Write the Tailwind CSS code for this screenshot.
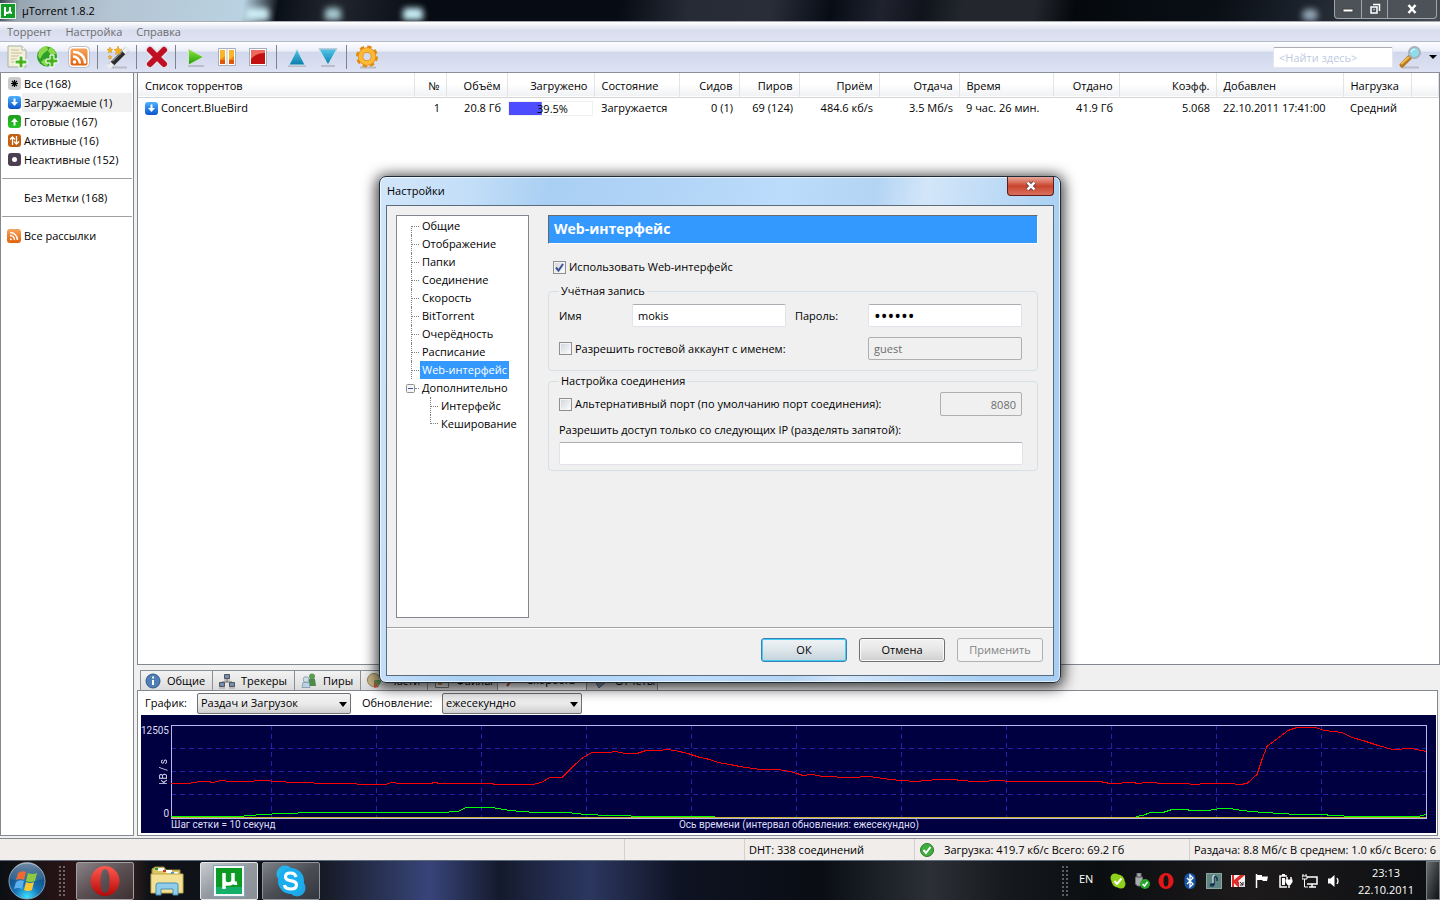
<!DOCTYPE html>
<html lang="ru">
<head>
    <meta charset="UTF-8">
    <meta name="viewport" content="width=device-width, initial-scale=1.0">
    <title>µTorrent 1.8.2</title>
    <script src="https://cdn.jsdelivr.net/npm/@tailwindcss/browser@4"></script>
</head>
<body class="relative flex h-screen flex-col overflow-hidden bg-[#f0f0f0] font-['Open_Sans',sans-serif] text-[11px] leading-4 text-black">

    <!-- Gradients shared by the icons -->
    <svg class="absolute h-0 w-0" aria-hidden="true">
        <defs>
            <linearGradient id="g-blue" x2="0" y2="1"><stop stop-color="#4db1ff"/><stop offset="1" stop-color="#0a55c9"/></linearGradient>
            <linearGradient id="g-green" x2="0" y2="1"><stop stop-color="#1f9c1f"/><stop offset="1" stop-color="#23c523"/></linearGradient>
            <linearGradient id="g-orange" x2="0" y2="1"><stop stop-color="#f7a45c"/><stop offset="1" stop-color="#e0620c"/></linearGradient>
            <linearGradient id="g-cyan" x2="0" y2="1"><stop stop-color="#52c7ea"/><stop offset="1" stop-color="#0c7bab"/></linearGradient>
            <linearGradient id="g-red" x2="0" y2="1"><stop stop-color="#ff5a50"/><stop offset="1" stop-color="#b30808"/></linearGradient>
            <linearGradient id="g-lime" x2="0" y2="1"><stop stop-color="#8ee83a"/><stop offset="1" stop-color="#1d9a0c"/></linearGradient>
            <radialGradient id="g-orb" cx=".5" cy=".95" r=".8"><stop stop-color="#3fe0ff"/><stop offset=".45" stop-color="#1574b8"/><stop offset="1" stop-color="#12416e"/></radialGradient>
            <linearGradient id="g-shine" x2="0" y2="1"><stop stop-color="#fff" stop-opacity=".75"/><stop offset="1" stop-color="#fff" stop-opacity=".1"/></linearGradient>
        </defs>
    </svg>

    <!-- Title bar -->
    <header class="flex h-[22px] shrink-0 items-center justify-between overflow-hidden border-b border-[#a9aab2] bg-[linear-gradient(100deg,#3c4650_0px,#98a6b2_20px,#b4c4d2_110px,#b9d2e2_240px,#0a1018_275px,#22272f_330px,#070b13_420px,#070b13_610px,#262b36_680px,#2a2d38_760px,#070c15_820px,#20232f_870px,#10131b_910px,#23272d_950px,#23272d_1020px,#05090d_1060px,#0a0f16_1200px,#1a212a_1280px,#4a5158_1440px)]">
        <div class="flex items-center gap-1.5">
            <svg class="h-4 w-4" viewBox="0 0 16 16"><rect x=".5" y=".5" width="15" height="15" fill="#0f9d26" stroke="#e5f2ea"/><path d="M5 13V4m0 0v4q0 2 2 2t3-2V4m0 4q0 2 2 2" fill="none" stroke="#fff" stroke-width="2"/></svg>
            <h1>µTorrent 1.8.2</h1>
        </div>
        <div class="flex grow self-stretch pl-[150px]">
            <span class="mt-2 h-3 w-6 rounded-t bg-[#cdeef5] blur-[3px]"></span>
            <span class="mt-2 ml-14 h-3 w-4 rounded-t bg-[#a9cbd3] blur-[3px]"></span>
            <span class="mt-2 ml-[62px] h-3 w-5 rounded-t bg-[#c9f1f8] blur-[3px]"></span>
        </div>
        <span class="mt-2 mr-4 h-3 w-4 rounded-full bg-[#93a5b5] blur-[3px]"></span>
        <div class="mr-[3px] flex h-[19px] self-start rounded-b border border-t-0 border-[#a0a5aa] bg-[#4c5258]">
            <button aria-label="Свернуть" class="flex w-[27px] items-center justify-center border-r border-[#a0a5aa]"><svg class="h-3 w-3" viewBox="0 0 12 12"><rect x="1" y="6" width="10" height="3" fill="#fff" stroke="#444"/></svg></button>
            <button aria-label="Свернуть в окно" class="flex w-[26px] items-center justify-center border-r border-[#a0a5aa]"><svg class="h-3 w-3" viewBox="0 0 12 12"><path d="M4 1.500h6.500V8M2 4h6v6H2zM4.500 6.500h1" fill="none" stroke="#fff" stroke-width="1.500"/></svg></button>
            <button aria-label="Закрыть" class="flex w-[48px] items-center justify-center"><svg class="h-3 w-3" viewBox="0 0 12 12"><path d="M2.500 2l7 8M9.500 2l-7 8" stroke="#fff" stroke-width="2.500"/></svg></button>
        </div>
    </header>

    <!-- Menu -->
    <nav class="flex h-5 shrink-0 items-center gap-3.5 border-b border-[#b4bac8] bg-linear-to-b from-white via-[#d9deef] via-45% to-[#dfe3f4] px-[7px] text-[#6d6d6d]">
        <a href="#">Торрент</a>
        <a href="#">Настройка</a>
        <a href="#">Справка</a>
    </nav>

    <!-- Toolbar -->
    <div class="flex h-[31px] shrink-0 items-center border-b border-[#8b8f9b] bg-[linear-gradient(#fcfdff,#eceff8_30%,#d2d8ec_34%,#dde3f3)]">
        <div class="flex gap-[7px] pr-1.5 pl-[5px]">
            <button aria-label="Добавить торрент"><svg class="h-6 w-6" viewBox="0 0 24 24"><path d="M3 1h14l4 4v17H3z" fill="#f3efd9" stroke="#a9b0a8"/><path d="M17 1v4h4" fill="#fff" stroke="#a9b0a8"/><path d="M6 5h8M6 8h11M6 11h9M6 14h6M6 17h6" stroke="#c8bf98"/><path d="M14 11h4v4h4v4h-4v4h-4v-4h-4v-4h4z" fill="#5cc531" stroke="#fff"/><path d="M16 12v10M11 17h10" stroke="#3aa31d"/></svg></button>
            <button aria-label="Добавить по ссылке"><svg class="h-6 w-6" viewBox="0 0 24 24"><circle cx="11" cy="11.500" r="10" fill="#2da02a"/><path d="M3 6q3-5 8-5l1 4-5 4-3 5-2-3zM14 2q5 2 6 7l-5 1-3-4zM8 14l5 2-2 5q-4-1-6-4z" fill="#8bd84c"/><path d="M14 10h4v4h4v4h-4v4h-4v-4h-4v-4h4z" fill="#5cc531" stroke="#fff"/><path d="M16 11v10M11 16h10" stroke="#3aa31d"/></svg></button>
            <button aria-label="Добавить рассылку"><svg class="h-6 w-6" viewBox="0 0 24 24"><rect x="1.500" y="1.500" width="21" height="21" rx="4" fill="#fff" stroke="#b9bcc4"/><rect x="3.500" y="3.500" width="17" height="17" rx="2" fill="url(#g-orange)"/><path d="M6 11.500a7 7 0 0 1 7 7M6 7a11 11 0 0 1 12 11.500" fill="none" stroke="#fff" stroke-width="2.500"/><circle cx="7.500" cy="17" r="1.800" fill="#fff"/></svg></button>
        </div>
        <div class="flex border-l border-[#7d828e] pr-1.5 pl-2">
            <button aria-label="Создать торрент"><svg class="h-6 w-6" viewBox="0 0 24 24"><path d="M4 22.500h17" stroke="#b8bdc8" stroke-width="2"/><path d="M4 21L21 4" stroke="#2b2b2b" stroke-width="5"/><path d="M2.500 22.500l4-4M17.500 7.500l5-5" stroke="#eceef0" stroke-width="5"/><path d="M6.500 16L16.500 6" stroke="#8a8a8a" stroke-width="1.500"/><path d="M12 1l1 3 3 .5-2.500 2 .8 3L12 8 9.500 9.500l.7-3L8 4.500l3-.5zM4 2l.8 2 2 .3-1.500 1.400.4 2L4 6.700 2.400 7.700l.3-2L1 4.300 3.200 4zM4 10l.6 1.400 1.400.2-1 1 .2 1.400-1.200-.7-1.300.7.3-1.400-1-1 1.400-.2z" fill="#f5b31c" stroke="#d98e0a" stroke-width=".5"/></svg></button>
        </div>
        <div class="flex border-l border-[#7d828e] pr-1.5 pl-2">
            <button aria-label="Удалить"><svg class="h-6 w-6" viewBox="0 0 24 24"><path d="M5 5l14 14M19 5L5 19" stroke="#dfe3e8" stroke-width="9" stroke-linecap="round"/><path d="M5 5l14 14M19 5L5 19" stroke="#c00f25" stroke-width="6" stroke-linecap="round"/></svg></button>
        </div>
        <div class="flex gap-[7px] border-l border-[#7d828e] pr-1.5 pl-2">
            <button aria-label="Запустить"><svg class="h-6 w-6" viewBox="0 0 24 24"><path d="M4 21h16" stroke="#b8bdc8" stroke-width="2"/><path d="M4.500 4l15 8-15 8z" fill="url(#g-lime)" stroke="#d6dfd6"/></svg></button>
            <button aria-label="Пауза"><svg class="h-6 w-6" viewBox="0 0 24 24"><path d="M3.500 3.500h17v17h-17z" fill="#fff" stroke="#a8adb8"/><path d="M5 5h5v14H5zM14 5h5v14h-5z" fill="#f0860c"/><path d="M5 5h5v6l-5 4zM14 5h5v6l-5 4z" fill="#f8b42a"/><path d="M5 19v-4h5v4zM14 19v-4h5v4z" fill="#e0560c"/><path d="M12 3v18" stroke="#b9bec8"/></svg></button>
            <button aria-label="Остановить"><svg class="h-6 w-6" viewBox="0 0 24 24"><rect x="3.500" y="3.500" width="17" height="17" fill="#fff" stroke="#a8adb8"/><rect x="5" y="5" width="14" height="14" fill="#c21010"/><path d="M5 5h14v3q-9 0-14 6z" fill="#ee6a5e"/></svg></button>
        </div>
        <div class="flex gap-[7px] border-l border-[#7d828e] pr-1.5 pl-2">
            <button aria-label="Выше в очереди"><svg class="h-6 w-6" viewBox="0 0 24 24"><path d="M3 21h18" stroke="#b8bdc8" stroke-width="2"/><path d="M12 4l8 16H4z" fill="url(#g-cyan)" stroke="#cfe3ee"/></svg></button>
            <button aria-label="Ниже в очереди"><svg class="h-6 w-6" viewBox="0 0 24 24"><path d="M5 21h14" stroke="#b8bdc8" stroke-width="2"/><path d="M3 4h18l-9 16z" fill="url(#g-cyan)" stroke="#cfe3ee"/><path d="M3 4h18" stroke="#8fb2c4"/></svg></button>
        </div>
        <div class="flex border-l border-[#7d828e] pl-2">
            <button aria-label="Конфигурация"><svg class="h-6 w-6" viewBox="0 0 24 24"><path d="M5 22.500h16" stroke="#b8bdc8" stroke-width="2"/><circle cx="12" cy="11.500" r="9" fill="none" stroke="#e08a14" stroke-width="4" stroke-dasharray="4 3.070"/><circle cx="12" cy="11.500" r="6.500" fill="none" stroke="#e08a14" stroke-width="5.500"/><circle cx="12" cy="11.500" r="6.500" fill="none" stroke="#fbb935" stroke-width="4"/></svg></button>
        </div>
        <div class="ml-auto flex items-center gap-1 pr-[3px]">
            <input type="text" aria-label="Поиск" placeholder="<Найти здесь>" class="h-[21px] w-[120px] rounded-xs border border-[#e2e6ee] border-t-[#abadb3] bg-white px-[5px] placeholder:text-[#bccbe0]">
            <button aria-label="Найти"><svg class="h-6 w-7" viewBox="0 0 28 24"><path d="M4 22.500h18" stroke="#b8bdc8" stroke-width="2"/><path d="M13 12l-8 8" stroke="#b87a1c" stroke-width="5" stroke-linecap="round"/><path d="M12 12l-8 7" stroke="#eebc58" stroke-width="2"/><circle cx="17.500" cy="7.500" r="5.500" fill="#8fdcea" stroke="#a7b0bb" stroke-width="2"/><path d="M14 7q1-3 4-3" stroke="#fff" fill="none"/></svg></button>
            <svg class="h-2 w-2" viewBox="0 0 8 8"><path d="M0 2h8L4 6z"/></svg>
        </div>
    </div>

    <!-- Categories, torrent list and details -->
    <main class="flex min-h-0 flex-1 gap-[3px] pb-[2px]">
        <aside class="flex w-[134px] shrink-0 flex-col border border-t-0 border-[#828790] bg-white px-px pt-px">
            <a href="#" class="flex h-[19px] items-center gap-[3px] pl-1.5"><svg class="h-[13px] w-[13px]" viewBox="0 0 13 13"><rect width="13" height="13" rx="3" fill="#cbcbcb"/><path d="M6.500 3v7M3 6.500h7M4 4l5 5M9 4L4 9" stroke="#000" stroke-width="1.200"/></svg>Все (168)</a>
            <a href="#" class="flex h-[19px] items-center pl-1.5"><svg class="mr-px h-[13px] w-[13px]" viewBox="0 0 13 13"><rect width="13" height="13" rx="3" fill="url(#g-blue)"/><path d="M5.500 2.500h2V6h2.500L6.500 10 3 6h2.500z" fill="#fff"/></svg><span class="flex h-full grow items-center bg-[#f0f0f0] pl-[2px]">Загружаемые (1)</span></a>
            <a href="#" class="flex h-[19px] items-center gap-[3px] pl-1.5"><svg class="h-[13px] w-[13px]" viewBox="0 0 13 13"><rect width="13" height="13" rx="3" fill="url(#g-green)"/><path d="M5.500 10.500h2V7h2.500L6.500 3 3 7h2.500z" fill="#fff"/></svg>Готовые (167)</a>
            <a href="#" class="flex h-[19px] items-center gap-[3px] pl-1.5"><svg class="h-[13px] w-[13px]" viewBox="0 0 13 13"><rect width="13" height="13" rx="3" fill="#c25f12"/><path d="M4.500 11V3M2 5.500L4.500 3 7 5.500M8.500 2v8M6 7.500L8.500 10 11 7.500" fill="none" stroke="#fff" stroke-width="1.300"/></svg>Активные (16)</a>
            <a href="#" class="flex h-[19px] items-center gap-[3px] pl-1.5"><svg class="h-[13px] w-[13px]" viewBox="0 0 13 13"><rect width="13" height="13" rx="3" fill="#4b3f50"/><circle cx="6.500" cy="6.500" r="2.500" fill="#fff"/></svg>Неактивные (152)</a>
            <hr class="my-[9px] border-[#a0a0a0]">
            <a href="#" class="flex h-[19px] items-center pl-[22px]">Без Метки (168)</a>
            <hr class="my-[9px] border-[#a0a0a0]">
            <a href="#" class="flex h-[19px] items-center gap-[3px] pl-[5px]"><svg class="h-[14px] w-[14px]" viewBox="0 0 14 14"><rect width="14" height="14" rx="3" fill="url(#g-orange)"/><path d="M3 6.500a4.500 4.500 0 0 1 4.500 4.500M3 3.500A7.500 7.500 0 0 1 10.500 11" fill="none" stroke="#fff" stroke-width="1.500"/><circle cx="3.800" cy="10.200" r="1" fill="#fff"/></svg>Все рассылки</a>
        </aside>

        <div class="flex min-w-0 flex-1 flex-col">
            <section class="min-h-0 flex-1 border border-t-0 border-[#828790] bg-white">
                <table class="w-full table-fixed border-collapse whitespace-nowrap">
                    <colgroup>
                        <col class="w-[276px]"><col class="w-8"><col class="w-[61px]"><col class="w-[87px]"><col class="w-[85px]"><col class="w-[60px]"><col class="w-[60px]"><col class="w-20"><col class="w-20"><col class="w-[94px]"><col class="w-[66px]"><col class="w-[97px]"><col class="w-[127px]"><col class="w-[68px]"><col>
                    </colgroup>
                    <thead>
                        <tr class="h-6 border-b border-[#d5d5d5] bg-linear-to-b from-white from-45% to-[#f1f2f4] *:border-r *:border-[#e2e3e6] *:pt-[3px] *:pr-1.5 *:pl-[7px] *:font-normal">
                            <th class="text-left">Список торрентов</th>
                            <th class="text-right">№</th>
                            <th class="text-right">Объём</th>
                            <th class="text-right">Загружено</th>
                            <th class="text-left">Состояние</th>
                            <th class="text-right">Сидов</th>
                            <th class="text-right">Пиров</th>
                            <th class="text-right">Приём</th>
                            <th class="text-right">Отдача</th>
                            <th class="text-left">Время</th>
                            <th class="text-right">Отдано</th>
                            <th class="text-right">Коэфф.</th>
                            <th class="text-left">Добавлен</th>
                            <th class="text-left">Нагрузка</th>
                            <td></td>
                        </tr>
                    </thead>
                    <tbody>
                        <tr class="h-[22px] *:pr-1.5 *:pl-[7px]">
                            <td><span class="flex items-center gap-[3px]"><svg class="h-[13px] w-[13px]" viewBox="0 0 13 13"><rect width="13" height="13" rx="3" fill="url(#g-blue)"/><path d="M5.500 2.500h2V6h2.500L6.500 10 3 6h2.500z" fill="#fff"/></svg>Concert.BlueBird</span></td>
                            <td class="text-right">1</td>
                            <td class="text-right">20.8 Гб</td>
                            <td class="px-px!"><div class="h-[15px] border border-[#f0f0f0] bg-[linear-gradient(#4d4dff,#4d4dff)] bg-no-repeat pl-1 text-center leading-[13px]" style="background-size: 39.5% 100%">39.5%</div></td>
                            <td>Загружается</td>
                            <td class="text-right">0 (1)</td>
                            <td class="text-right">69 (124)</td>
                            <td class="text-right">484.6 кб/s</td>
                            <td class="text-right">3.5 Мб/s</td>
                            <td>9 час. 26 мин.</td>
                            <td class="text-right">41.9 Гб</td>
                            <td class="text-right">5.068</td>
                            <td>22.10.2011 17:41:00</td>
                            <td>Средний</td>
                            <td></td>
                        </tr>
                    </tbody>
                </table>
            </section>

            <!-- Detail tabs -->
            <div class="flex h-[25px] shrink-0 items-end px-[3px]">
                <button class="flex h-5 w-[73px] items-center gap-1.5 border border-b-0 border-[#8a8f98] bg-linear-to-b from-[#f3f3f3] to-[#dcdcdc] px-1"><svg class="h-4 w-4 shrink-0" viewBox="0 0 16 16"><circle cx="8" cy="8" r="7" fill="#4f7fb5" stroke="#2f5a8c"/><path d="M8 7v5M8 3.500v2" stroke="#fff" stroke-width="2"/></svg>Общие</button>
                <button class="flex h-5 w-[82px] items-center gap-1.5 border border-b-0 border-l-0 border-[#8a8f98] bg-linear-to-b from-[#f3f3f3] to-[#dcdcdc] px-1.5"><svg class="h-4 w-4 shrink-0" viewBox="0 0 16 16"><path d="M8 6v3M3 12V9h10v3" fill="none" stroke="#666"/><path d="M5.500 1.500h5v4h-5zM.5 9.500h5v4h-5zM10.500 9.500h5v4h-5z" fill="#6f8fb8" stroke="#555"/><path d="M5 7h6M0 15h6M10 15h6" stroke="#999"/></svg>Трекеры</button>
                <button class="flex h-5 w-[66px] items-center gap-1.5 border border-b-0 border-l-0 border-[#8a8f98] bg-linear-to-b from-[#f3f3f3] to-[#dcdcdc] px-1.5"><svg class="h-4 w-4 shrink-0" viewBox="0 0 16 16"><circle cx="11" cy="3.500" r="3" fill="#5d9a55"/><path d="M8 6h6l1 7H8z" fill="#4d8a48"/><circle cx="5" cy="6.500" r="2.800" fill="#cfe0ec" stroke="#8ba3b5"/><path d="M2 9.500h6l1 5H1z" fill="#bcd3e4" stroke="#8ba3b5"/></svg>Пиры</button>
                <button class="flex h-5 w-[67px] items-center gap-1.5 border border-b-0 border-l-0 border-[#8a8f98] bg-linear-to-b from-[#f3f3f3] to-[#dcdcdc] px-1.5"><svg class="h-4 w-4 shrink-0" viewBox="0 0 16 16"><circle cx="7" cy="7" r="6.500" fill="#cdb98a" stroke="#8f8058"/><path d="M7 7h7a7 7 0 0 1-5 7z" fill="#5d9a55"/><path d="M7 8l5 6-5 1z" fill="#c05a48"/></svg>Части</button>
                <button class="flex h-5 w-[70px] items-center gap-1.5 border border-b-0 border-l-0 border-[#8a8f98] bg-linear-to-b from-[#f3f3f3] to-[#dcdcdc] px-1.5"><svg class="h-4 w-4 shrink-0" viewBox="0 0 16 16"><path d="M1.500 1.500h13v13h-13z" fill="#eee" stroke="#777"/><path d="M4 8h4v4H4z" fill="#c98a3a"/></svg>Файлы</button>
                <button class="flex h-[22px] w-[88px] items-center gap-1.5 border-t border-[#8a8f98] bg-white px-1.5"><svg class="h-4 w-4 shrink-0" viewBox="0 0 16 16"><path d="M3 14l9-11" stroke="#b5442e" stroke-width="2"/></svg>Скорость</button>
                <button class="flex h-5 w-[72px] items-center gap-1.5 border border-b-0 border-[#8a8f98] bg-linear-to-b from-[#f3f3f3] to-[#dcdcdc] px-1.5"><svg class="h-4 w-4 shrink-0" viewBox="0 0 16 16"><path d="M2 8l8-6 4 6-8 7z" fill="#7f93b0" stroke="#53657f"/></svg>Отчёты</button>
            </div>

            <section class="mr-[2px] shrink-0 border border-[#828790] bg-white pr-px pb-[2px] pl-[3px]">
                <div class="flex h-6 items-center pl-1">
                    <label for="graph" class="w-[52px]">График:</label>
                    <span class="relative mr-[11px]">
                        <select id="graph" class="h-[21px] w-[154px] appearance-none rounded-xs border border-[#707070] bg-linear-to-b from-[#f2f2f2] via-[#ebebeb] to-[#cfcfcf] pl-[3px]"><option>Раздач и Загрузок</option></select>
                        <svg class="pointer-events-none absolute top-2 right-1 h-2 w-2" viewBox="0 0 8 8"><path d="M0 1h8L4 6z"/></svg>
                    </span>
                    <label for="refresh" class="w-20">Обновление:</label>
                    <span class="relative">
                        <select id="refresh" class="h-[21px] w-[140px] appearance-none rounded-xs border border-[#707070] bg-linear-to-b from-[#f2f2f2] via-[#ebebeb] to-[#cfcfcf] pl-[3px]"><option>ежесекундно</option></select>
                        <svg class="pointer-events-none absolute top-2 right-1 h-2 w-2" viewBox="0 0 8 8"><path d="M0 1h8L4 6z"/></svg>
                    </span>
                </div>

                <!-- Speed graph -->
                <div class="grid h-[118px] grid-cols-[30px_1fr] grid-rows-[94px_14px] bg-[#000040] pt-[10px] pr-[9px] font-[Roboto,sans-serif] text-[10px] leading-[11px] text-[#dcdcf4]">
                    <div class="flex flex-col items-end justify-between pr-[2px]">
                        <span>12505</span>
                        <span class="rotate-180 [writing-mode:vertical-rl]">kB / s</span>
                        <span>0</span>
                    </div>
                    <svg class="h-full w-full" viewBox="0 0 1256 94" preserveAspectRatio="none" shape-rendering="crispEdges" fill="none">
                        <path d="M100.500 0v93M205.500 0v93M310.500 0v93M415.500 0v93M520.500 0v93M625.500 0v93M730.500 0v93M835.500 0v93M940.500 0v93M1045.500 0v93M1150.500 0v93" stroke="#2222a8" stroke-dasharray="5 4"/>
                        <path d="M0 23.500h1256M0 46.500h1256M0 69.500h1256" stroke="#2222a8" stroke-dasharray="5 4"/>
                        <path d="M.5 .5h1255v93H.5z" stroke="#b8b8f0"/>
                        <path d="M1 92.500h1254" stroke="#c8b428"/>
                        <polyline stroke="#00ff00" points="0,91.500 67,91.500 79,90.500 91,89.500 111,88.500 144,87.500 269,87.500 287,86.500 295,82.500 321,82.500 339,85.500 364,87.500 396,87.500 414,89.500 439,90.500 481,91.500 544,91.500"/>
                        <polyline stroke="#00ff00" points="965,91.500 972,90.500 979,87.500 992,87.500 1001,84.500 1016,84.500 1019,85.500 1037,85.500 1049,83.500 1059,83.500 1071,85.500 1092,87.500 1112,88.500 1124,89.500 1154,89.500 1159,90.500 1187,91.500 1247,91.500 1255,89.500"/>
                        <polyline stroke="#ff0000" points="0,58.500 17,58.500 29,56.500 37,56.500 42,57.500 50,55.500 59,56.500 76,56.500 91,55.500 109,56.500 121,57.500 139,57.500 147,58.500 185,58.500 187,59.500 214,59.500 221,57.500 229,58.500 259,58.500 264,57.500 269,58.500 321,58.500 324,59.500 362,59.500 370,57.500 379,52.500 391,52.500 404,39.500 412,32.500 421,27.500 437,27.500 445,26.500 454,28.500 466,28.500 475,25.500 489,25.500 495,24.500 504,25.500 517,28.500 529,32.500 539,34.500 547,37.500 559,39.500 569,41.500 589,44.500 607,44.500 619,46.500 626,48.500 632,50.500 641,49.500 652,51.500 679,52.500 699,51.500 719,54.500 744,56.500 767,54.500 786,54.500 787,55.500 807,56.500 829,55.500 839,56.500 929,56.500 939,58.500 963,57.500 966,58.500 977,57.500 994,58.500 1014,58.500 1024,59.500 1034,58.500 1059,58.500 1069,59.500 1076,58.500 1086,49.500 1091,34.500 1096,21.500 1117,5.500 1126,2.500 1144,2.500 1154,5.500 1171,7.500 1181,12.500 1192,15.500 1207,20.500 1222,24.500 1241,23.500 1255,26.500"/>
                    </svg>
                    <div class="col-start-2 grid grid-cols-[1fr_auto_1fr]"><span>Шаг сетки = 10 секунд</span><span>Ось времени (интервал обновления: ежесекундно)</span></div>
                </div>
            </section>
        </div>
    </main>

    <!-- Status bar -->
    <footer class="flex h-[22px] shrink-0 items-center overflow-hidden border-t border-[#828790] bg-[#f0edeb] whitespace-nowrap *:h-full *:items-center">
        <div class="flex min-w-0 flex-1 border-r border-[#d4d0cd]"></div>
        <div class="flex w-[120px] border-r border-[#d4d0cd]"></div>
        <div class="flex w-[170px] border-r border-[#d4d0cd] pl-1">DHT: 338 соединений</div>
        <div class="flex w-[275px] gap-2.5 border-r border-[#d4d0cd] pl-[5px]"><svg class="h-[14px] w-[14px]" viewBox="0 0 14 14"><circle cx="7" cy="7" r="6.500" fill="#3fae3f" stroke="#2b7a2b"/><path d="M3.500 7l2.500 3 4.500-6" fill="none" stroke="#fff" stroke-width="2"/></svg>Загрузка: 419.7 кб/с Всего: 69.2 Гб</div>
        <div class="flex w-[250px] pl-1">Раздача: 8.8 Мб/с В среднем: 1.0 кб/с Всего: 6</div>
    </footer>

    <!-- Taskbar -->
    <div class="flex h-10 shrink-0 items-center border-t border-[#5c6c7c] bg-[linear-gradient(90deg,#0b0f14_0px,#2a1416_70px,#30201f_130px,#0e1116_150px,#12151c_310px,#2f3a63_400px,#38447a_430px,#141a2c_500px,#222b4c_550px,#2c3760_590px,#0e1322_680px,#0a0d14_820px,#1c2127_880px,#2c3036_930px,#15181c_1010px,#0b0e11_1100px,#1d1a1b_1250px,#0c0f12_1440px)]">
        <button aria-label="Пуск" class="ml-2"><svg class="h-[38px] w-[38px]" viewBox="0 0 38 38"><circle cx="19" cy="19" r="18" fill="url(#g-orb)" stroke="#86a6bd"/><path d="M2 17a17 17 0 0 1 34 0q-17 6-34 0z" fill="url(#g-shine)" opacity=".55"/><path d="M10 11q4-3 8-1l-2 8q-4-2-8 0z" fill="#ee6a30"/><path d="M20 11q4 2 9 0l-2 8q-5 2-9 0z" fill="#8fca3c"/><path d="M8 20q4-3 8-1l-2 8q-4-2-8 0z" fill="#5cb0ee"/><path d="M18 20q4 2 8 0l-2 8q-4 2-8 0z" fill="#fbc834"/></svg></button>
        <span class="ml-3 h-8 w-2 bg-[radial-gradient(#6a6463_1px,transparent_1px)] bg-[size:4px_4px]"></span>
        <div class="ml-[10px] flex gap-1">
            <button aria-label="Opera" class="flex h-[38px] w-[58px] items-center justify-center rounded-xs border border-[#a39ea0] bg-linear-to-br from-[#8a8488] via-[#5a4f52] to-[#3e3134]"><svg class="h-8 w-8" viewBox="0 0 32 32"><path fill-rule="evenodd" d="M16 1a14.500 15 0 1 0 .01 0zM16 4q4.500 0 4.500 12T16 28 11.500 16 16 4z" fill="url(#g-red)"/></svg></button>
            <button aria-label="Проводник" class="flex h-[38px] w-[58px] items-center justify-center"><svg class="h-8 w-[34px]" viewBox="0 0 34 32"><path d="M2 4l3-2h9l2 3h14v7H2z" fill="#dcc463" stroke="#9b8a40"/><path d="M8 3h6v3H8zM16 5h6v3h-6zM22 7h6v3h-6z" fill="#fff"/><path d="M5 3h3v2H5z" fill="#2ca02c"/><path d="M13 5h3v2h-3z" fill="#c0392b"/><path d="M21 7h3v2h-3z" fill="#3498db"/><path d="M1 9h32v19H1z" fill="#f3e196" stroke="#c3aa50"/><path d="M6 30V20q0-2 2-2h18q2 0 2 2v10h-5v-6H11v6z" fill="#8fcdea" stroke="#4b8fb5"/></svg></button>
            <button aria-label="µTorrent" class="flex h-[38px] w-[58px] items-center justify-center rounded-xs border border-[#e4e6e8] bg-linear-to-br from-[#c9cdd0] via-[#94999f] to-[#8a8f95]"><svg class="h-8 w-8" viewBox="0 0 32 32"><rect x=".5" y=".5" width="31" height="31" fill="#f4f8fa" stroke="#88a5b8"/><rect x="3" y="3" width="26" height="26" fill="#0c9a22"/><path d="M3 22h26v7H3z" fill="#14b06a"/><path d="M11 24V8v7q0 4 4 4 5 0 5-4V8v7q0 4 4 3" fill="none" stroke="#fff" stroke-width="3.500"/></svg></button>
            <button aria-label="Skype" class="flex h-[38px] w-[58px] items-center justify-center rounded-xs border border-[#8e959e] bg-linear-to-br from-[#7d8287] via-[#4b4e55] to-[#33363e]"><svg class="h-8 w-8" viewBox="0 0 32 32"><circle cx="10" cy="9" r="8.500" fill="#27b3ec"/><circle cx="22" cy="23" r="8.500" fill="#1fa7e4"/><circle cx="16" cy="16" r="13" fill="#1aaeee"/><path d="M21 12q-1-4-5.500-4-5 0-5 3.700 0 3 5 4 6 1 6 4.300 0 4-5.500 4-6 0-6.500-4" fill="none" stroke="#fff" stroke-width="3.200"/></svg></button>
        </div>
        <div class="ml-auto flex h-full items-center text-white">
            <span class="h-8 w-2 bg-[radial-gradient(#5b5f63_1px,transparent_1px)] bg-[size:4px_4px]"></span>
            <span class="mb-1 ml-2.5 w-[31px]">EN</span>
            <div class="flex gap-2">
                <svg class="h-4 w-4" viewBox="0 0 16 16"><circle cx="5" cy="5" r="4.500" fill="#8fd01a"/><circle cx="11" cy="11" r="4.500" fill="#8fd01a"/><circle cx="8" cy="8" r="6.500" fill="#8fd01a"/><path d="M4.500 8l2.500 3 4.500-5.500" fill="none" stroke="#fff" stroke-width="2"/></svg>
                <svg class="h-4 w-4" viewBox="0 0 16 16"><path d="M3 0h4v4H3zM1.500 4h7v7l-2 2h-3l-2-2z" fill="#a8abae" stroke="#6a6d70"/><circle cx="11" cy="11" r="5" fill="#27a52b"/><path d="M8.500 11l2 2 3-4" fill="none" stroke="#fff" stroke-width="1.500"/></svg>
                <svg class="h-4 w-4" viewBox="0 0 16 16"><path fill-rule="evenodd" d="M8 0a7.500 8 0 1 0 .01 0zM8 2.500q2.500 0 2.500 5.500T8 13.500 5.500 8 8 2.500z" fill="#e01818"/></svg>
                <svg class="h-4 w-4" viewBox="0 0 16 16"><rect x="2.500" width="11" height="16" rx="5.500" fill="#1554a4"/><path d="M5 5l6 6-3 3V2l3 3-6 6" fill="none" stroke="#fff" stroke-width="1.300"/></svg>
                <svg class="h-4 w-4" viewBox="0 0 16 16"><rect x=".5" y=".5" width="15" height="15" fill="#5f8580" stroke="#8aa5a0"/><path d="M8 12V3q4 1 3 5" fill="none" stroke="#16335a" stroke-width="1.500"/><ellipse cx="6" cy="12" rx="2.500" ry="1.800" fill="#16335a"/><path d="M7 10V3q1-1 2 0" fill="none" stroke="#fff"/></svg>
                <svg class="h-4 w-4" viewBox="0 0 16 16"><path d="M1 2h14v12H1z" fill="#f0f0f0"/><path d="M4 2v5l6-5h5L8 8l5 6H8L4 10v4H2V2z" fill="#e02a2a"/><path d="M9 9h6v5H9z" fill="#ddd"/><path d="M10 9l3 3m0-3v3h-3" stroke="#333" fill="none"/></svg>
                <svg class="h-4 w-4" viewBox="0 0 16 16"><path d="M2.500 1v14" stroke="#fff" stroke-width="1.500"/><path d="M3 2h5v1.500h6L13 8H8.500V7H3z" fill="#fff"/></svg>
                <svg class="h-4 w-4" viewBox="0 0 16 16"><path d="M9 3H2v11h7" fill="none" stroke="#fff" stroke-width="1.500"/><path d="M4 1h3v2H4zM4 5h3v7H4z" fill="#fff"/><path d="M9 4v3M13 4v3M11 11v4" stroke="#fff" stroke-width="1.500"/><path d="M7.500 6.500h7V9l-2 3h-3l-2-3z" fill="#fff"/></svg>
                <svg class="h-4 w-4" viewBox="0 0 16 16"><path d="M5 4h10v7H5M7 14h7M10 11v3" fill="none" stroke="#fff" stroke-width="1.500"/><path d="M1 1v2M4 1v2M0 3h5v3H0zM2.500 6v8H6" fill="none" stroke="#fff"/></svg>
                <svg class="h-4 w-4" viewBox="0 0 16 16"><path d="M2 5.500h2.500L8.500 2v12l-4-3.500H2z" fill="#fff"/><path d="M11 5q2 3 0 6" fill="none" stroke="#fff" stroke-width="1.300"/></svg>
            </div>
            <time class="w-[84px] pl-1 text-center leading-[17px]">23:13<br>22.10.2011</time>
            <button aria-label="Свернуть все окна" class="h-full w-[14px] border border-[#7b7f82] bg-linear-to-br from-[#6b6e71] to-[#0f1214]"></button>
        </div>
    </div>

    <!-- Preferences window -->
    <div role="dialog" aria-labelledby="prefs-title" class="absolute inset-x-0 top-[176px] mx-auto flex h-[507px] w-[682px] flex-col rounded-[7px] border border-[#1d2a38] bg-[linear-gradient(100deg,#d2e6fa_0px,#c3def8_90px,#a9cff3_170px,#b5d7f8_330px,#bcdcfc_400px,#b3d4f3_490px,#d3e6f9_540px,#a8cff3_681px)] px-1.5 pb-1.5 shadow-[0_2px_14px_3px_rgba(0,0,0,0.75),inset_0_0_0_1px_#ffffffaa]">
        <div class="flex h-[28px] shrink-0 items-center justify-between">
            <h2 id="prefs-title" class="pl-px">Настройки</h2>
            <button aria-label="Закрыть" class="flex h-[19px] w-[47px] items-center justify-center self-start rounded-b border border-t-0 border-[#5e1d18] bg-linear-to-b from-[#e8a79b] via-[#c9432c] via-50% to-[#d8705c]"><svg class="h-3 w-3" viewBox="0 0 12 12"><path d="M2.500 2.500l7 7M9.500 2.500l-7 7" stroke="#5a2a2a" stroke-width="4"/><path d="M2.500 2.500l7 7M9.500 2.500l-7 7" stroke="#fff" stroke-width="2.500"/></svg></button>
        </div>

        <form class="flex min-h-0 flex-1 flex-col border border-[#5a6b7d] bg-[#f0f0f0]">
            <div class="flex min-h-0 flex-1 gap-[19px] pt-[9px] pr-[15px] pb-[9px] pl-[9px]">
                <ul class="w-[133px] shrink-0 border border-[#828790] bg-white *:h-[18px] *:items-center *:pl-[14px]">
                    <li class="mt-px flex"><span class="mt-[9px] h-[9px] w-2 border-t border-l border-dotted border-[#808080]"></span><a href="#" class="ml-px px-[2px]">Общие</a></li>
                    <li class="flex"><span class="flex h-full w-2 items-center border-l border-dotted border-[#808080]"><span class="w-full border-t border-dotted border-[#808080]"></span></span><a href="#" class="ml-px px-[2px]">Отображение</a></li>
                    <li class="flex"><span class="flex h-full w-2 items-center border-l border-dotted border-[#808080]"><span class="w-full border-t border-dotted border-[#808080]"></span></span><a href="#" class="ml-px px-[2px]">Папки</a></li>
                    <li class="flex"><span class="flex h-full w-2 items-center border-l border-dotted border-[#808080]"><span class="w-full border-t border-dotted border-[#808080]"></span></span><a href="#" class="ml-px px-[2px]">Соединение</a></li>
                    <li class="flex"><span class="flex h-full w-2 items-center border-l border-dotted border-[#808080]"><span class="w-full border-t border-dotted border-[#808080]"></span></span><a href="#" class="ml-px px-[2px]">Скорость</a></li>
                    <li class="flex"><span class="flex h-full w-2 items-center border-l border-dotted border-[#808080]"><span class="w-full border-t border-dotted border-[#808080]"></span></span><a href="#" class="ml-px px-[2px]">BitTorrent</a></li>
                    <li class="flex"><span class="flex h-full w-2 items-center border-l border-dotted border-[#808080]"><span class="w-full border-t border-dotted border-[#808080]"></span></span><a href="#" class="ml-px px-[2px]">Очерёдность</a></li>
                    <li class="flex"><span class="flex h-full w-2 items-center border-l border-dotted border-[#808080]"><span class="w-full border-t border-dotted border-[#808080]"></span></span><a href="#" class="ml-px px-[2px]">Расписание</a></li>
                    <li class="flex"><span class="flex h-full w-2 items-center border-l border-dotted border-[#808080]"><span class="w-full border-t border-dotted border-[#808080]"></span></span><a href="#" class="ml-px bg-[#3399ff] px-[2px] leading-[18px] whitespace-nowrap text-white">Web-интерфейс</a></li>
                    <li class="flex pl-[9px]!"><svg class="h-[9px] w-[9px]" viewBox="0 0 9 9"><rect x=".5" y=".5" width="8" height="8" rx="1" fill="#f4f4f4" stroke="#919191"/><path d="M2 4.500h5" stroke="#3a55a8"/></svg><span class="w-1 border-t border-dotted border-[#808080]"></span><a href="#" class="ml-px px-[2px]">Дополнительно</a></li>
                    <li class="flex pl-[33px]!"><span class="flex h-full w-2 items-center border-l border-dotted border-[#808080]"><span class="w-full border-t border-dotted border-[#808080]"></span></span><a href="#" class="ml-px px-[2px]">Интерфейс</a></li>
                    <li class="flex pl-[33px]!"><span class="mb-[9px] h-[9px] w-2 border-b border-l border-dotted border-[#808080]"></span><a href="#" class="ml-px px-[2px]">Кеширование</a></li>
                </ul>

                <div class="min-w-0 flex-1">
                    <h3 class="h-[29px] border border-[#696969] border-r-white border-b-white bg-[#3399ff] px-[5px] text-[14px] leading-[26px] font-bold text-white">Web-интерфейс</h3>
                    <label class="mt-[15px] flex h-4 items-center gap-[3px] pl-[5px]">
                        <span class="relative h-[13px] w-[13px]">
                            <input type="checkbox" checked class="block h-[13px] w-[13px] appearance-none border border-[#8e8f8f] bg-linear-to-br from-[#cfd3da] to-white shadow-[inset_0_0_0_1px_#f4f4f4]">
                            <svg class="pointer-events-none absolute inset-0 h-[13px] w-[13px]" viewBox="0 0 13 13"><path d="M3 6.500l2.500 3L10 3" fill="none" stroke="#3f5293" stroke-width="2"/></svg>
                        </span>
                        Использовать Web-интерфейс
                    </label>
                    <fieldset class="mt-2 h-[88px] rounded border border-[#d5dfe5] px-2.5">
                        <legend class="px-[2px]">Учётная запись</legend>
                        <div class="-mt-px flex items-center pt-[6px]">
                            <label for="login" class="w-[73px]">Имя</label>
                            <input id="login" type="text" value="mokis" class="h-[23px] w-[154px] rounded-xs border border-[#e2e3ea] border-t-[#abadb3] bg-white px-[5px]">
                            <label for="password" class="ml-[9px] w-[73px]">Пароль:</label>
                            <input id="password" type="password" value="secret" class="h-[23px] w-[154px] rounded-xs border border-[#e2e3ea] border-t-[#abadb3] bg-white px-[5px] text-[18px]">
                        </div>
                        <div class="mt-2.5 flex items-center justify-between pr-[5px]">
                            <label class="flex items-center gap-[3px]"><input type="checkbox" class="h-[13px] w-[13px] appearance-none border border-[#8e8f8f] bg-linear-to-br from-[#cfd3da] to-white shadow-[inset_0_0_0_1px_#f4f4f4]">Разрешить гостевой аккаунт с именем:</label>
                            <input type="text" aria-label="Гостевой аккаунт" value="guest" disabled class="h-[23px] w-[154px] rounded-xs border border-[#afafaf] bg-[#f0f0f0] px-[5px] text-[#6d6d6d]">
                        </div>
                    </fieldset>
                    <fieldset class="mt-[2px] h-[98px] rounded border border-[#d5dfe5] px-2.5">
                        <legend class="px-[2px]">Настройка соединения</legend>
                        <div class="flex items-center justify-between pt-[3px] pr-[5px]">
                            <label class="flex items-center gap-[3px]"><input type="checkbox" class="h-[13px] w-[13px] appearance-none border border-[#8e8f8f] bg-linear-to-br from-[#cfd3da] to-white shadow-[inset_0_0_0_1px_#f4f4f4]">Альтернативный порт (по умолчанию порт соединения):</label>
                            <input type="text" aria-label="Порт" value="8080" disabled class="h-6 w-[82px] rounded-xs border border-[#afafaf] bg-[#f0f0f0] px-[5px] text-right text-[#6d6d6d]">
                        </div>
                        <label for="ip" class="mt-1.5 block">Разрешить доступ только со следующих IP (разделять запятой):</label>
                        <input id="ip" type="text" class="mt-1 block h-[23px] w-[464px] rounded-xs border border-[#e2e3ea] border-t-[#abadb3] bg-white px-[5px]">
                    </fieldset>
                </div>
            </div>
            <div class="flex h-12 shrink-0 justify-end gap-3 border-t border-[#a0a0a0] pt-2.5 pr-[10px] shadow-[inset_0_1px_0_#fff] *:h-6 *:w-[86px] *:rounded-[3px] *:border">
                <button class="border-[#3c7fb1] bg-linear-to-b from-[#f0f4f6] via-[#dde6ea] to-[#c3d3db] shadow-[inset_0_0_0_1px_#3fcdf5]">ОК</button>
                <button class="border-[#707070] bg-linear-to-b from-[#f2f2f2] via-[#e6e6e6] to-[#cfcfcf] shadow-[inset_0_0_0_1px_#fafafa]">Отмена</button>
                <button disabled class="border-[#adb2b5] bg-[#f4f4f4] text-[#838383]">Применить</button>
            </div>
        </form>
    </div>
</body>
</html>
